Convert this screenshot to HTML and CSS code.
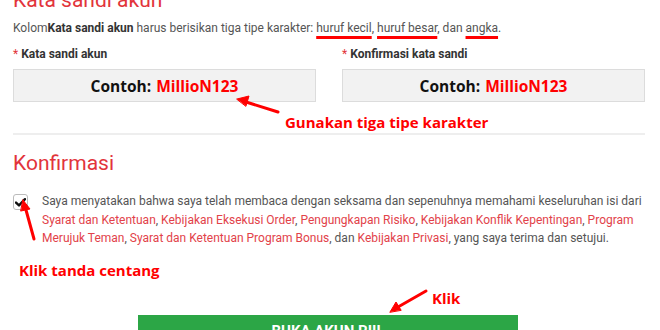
FILE: index.html
```html
<!DOCTYPE html>
<html lang="id">
<head>
<meta charset="utf-8">
<link rel="stylesheet" href="styles.css">
</head>
<body>
<div class="page">
  <h2 class="title title-top">Kata sandi akun</h2>
  <p class="intro">Kolom<b>Kata sandi akun</b> harus berisikan tiga tipe karakter: <span class="mark">huruf kecil</span>, <span class="mark">huruf besar</span>, dan <span class="mark">angka</span>.</p>
  <div class="fields">
    <div class="field">
      <div class="label"><span class="req">*</span> Kata sandi akun</div>
      <div class="box">Contoh: <span class="ex">MillioN123</span></div>
    </div>
    <div class="field">
      <div class="label"><span class="req">*</span> Konfirmasi kata sandi</div>
      <div class="box">Contoh: <span class="ex">MillioN123</span></div>
    </div>
  </div>
  <div class="note note-types">Gunakan tiga tipe karakter</div>
  <hr class="rule">
  <h2 class="title">Konfirmasi</h2>
  <div class="agree">
    <span class="check"><svg width="11" height="9" viewBox="0 0 11 9"><path d="M1 4.6 L4 7.4 L10 1.2" fill="none" stroke="#111" stroke-width="2.4" stroke-linecap="round" stroke-linejoin="round"/></svg></span>
    <p class="agree-text">Saya menyatakan bahwa saya telah membaca dengan seksama dan sepenuhnya memahami keseluruhan isi dari <a>Syarat dan Ketentuan</a>, <a>Kebijakan Eksekusi Order</a>, <a>Pengungkapan Risiko</a>, <a>Kebijakan Konflik Kepentingan</a>, <a>Program Merujuk Teman</a>, <a>Syarat dan Ketentuan Program Bonus</a>, dan <a>Kebijakan Privasi</a>, yang saya terima dan setujui.</p>
  </div>
  <div class="note note-check">Klik tanda centang</div>
  <div class="note note-klik">Klik</div>
  <div class="btn-row"><button class="btn">BUKA AKUN RIIL</button></div>

  <svg class="arrows" width="660" height="330" viewBox="0 0 660 330">
    <g stroke="#f00" stroke-width="3" stroke-linecap="round" fill="#f00">
      <line x1="278" y1="124" x2="246" y2="114"/>
      <polygon points="237,111 249,108 246,118" stroke-width="1"/>
      <line x1="34" y1="251" x2="26" y2="222"/>
      <polygon points="23,212 30,221 21,223" stroke-width="1"/>
      <line x1="426" y1="303" x2="398" y2="319"/>
      <polygon points="390,324 396,314 401,322" stroke-width="1"/>
    </g>
  </svg>
</div>
</body>
</html>
```
FILE: styles.css
```css
html, body {
  margin: 0;
  padding: 0;
  background: #fff;
}
body {
  font-family: Roboto, "Noto Sans", sans-serif;
  color: #555;
  overflow: hidden;
  width: 660px;
  height: 330px;
}
.page {
  position: relative;
  padding: 0 15px 0 13px;
}
.title {
  margin: 0;
  font-family: Roboto, sans-serif;
  font-weight: 400;
  font-size: 21px;
  line-height: 24px;
  color: #e2343b;
}
.title-top {
  margin-top: -12px;
}
.intro {
  margin: 7px 0 0;
  font-size: 12px;
  line-height: 18px;
  color: #555;
}
.intro b {
  color: #333;
}
.mark {
  text-decoration: underline;
  text-decoration-color: #f00;
  text-decoration-thickness: 3px;
  text-underline-offset: 4px;
}
.fields {
  display: grid;
  grid-template-columns: 303px 303px;
  column-gap: 26px;
  margin-top: 8px;
}
.label {
  font-size: 12px;
  font-weight: 700;
  color: #333;
  line-height: 18px;
}
.req {
  color: #e2343b;
  font-weight: 400;
}
.box {
  margin-top: 6px;
  height: 31px;
  border: 1px solid #dcdcdc;
  background: #f2f2f2;
  display: flex;
  align-items: center;
  justify-content: center;
  font-family: "Open Sans", sans-serif;
  font-weight: 700;
  font-size: 15.5px;
  color: #111;
}
.ex {
  color: #f00;
  margin-left: 5px;
}
.note {
  font-family: "Open Sans", sans-serif;
  font-weight: 700;
  font-size: 15px;
  color: #f00;
  line-height: 20px;
}
.note-types {
  margin-top: 10px;
  padding-left: 272px;
}
.rule {
  margin: 1px 0 0;
  border: 0;
  border-top: 2px solid #eeeeee;
}
.rule + .title {
  margin-top: 16px;
}
.agree {
  display: flex;
  align-items: flex-start;
  margin-top: 17px;
}
.check {
  flex: none;
  width: 13px;
  height: 14px;
  border: 1px solid #bbb;
  border-radius: 3px;
  display: flex;
  align-items: center;
  justify-content: center;
  margin-top: 2px;
  background: #fff;
}
.agree-text {
  margin: 0 0 0 14px;
  font-size: 12px;
  line-height: 18.5px;
  color: #555;
}
.agree-text a {
  color: #e2424a;
}
.note-check {
  margin-top: 12px;
  padding-left: 6px;
}
.note-klik {
  margin-top: 8px;
  padding-left: 419px;
}
.btn-row {
  padding-left: 125px;
  margin-top: 7px;
}
.btn {
  width: 380px;
  height: 36px;
  border: 0;
  background: #2ca646;
  color: #fff;
  font-family: "Liberation Sans Narrow", Roboto, sans-serif;
  font-weight: 700;
  font-size: 15px;
  padding: 7px 0 0;
  display: flex;
  justify-content: center;
  align-items: flex-start;
}
.arrows {
  position: absolute;
  left: 0;
  top: 0;
  pointer-events: none;
}
```
